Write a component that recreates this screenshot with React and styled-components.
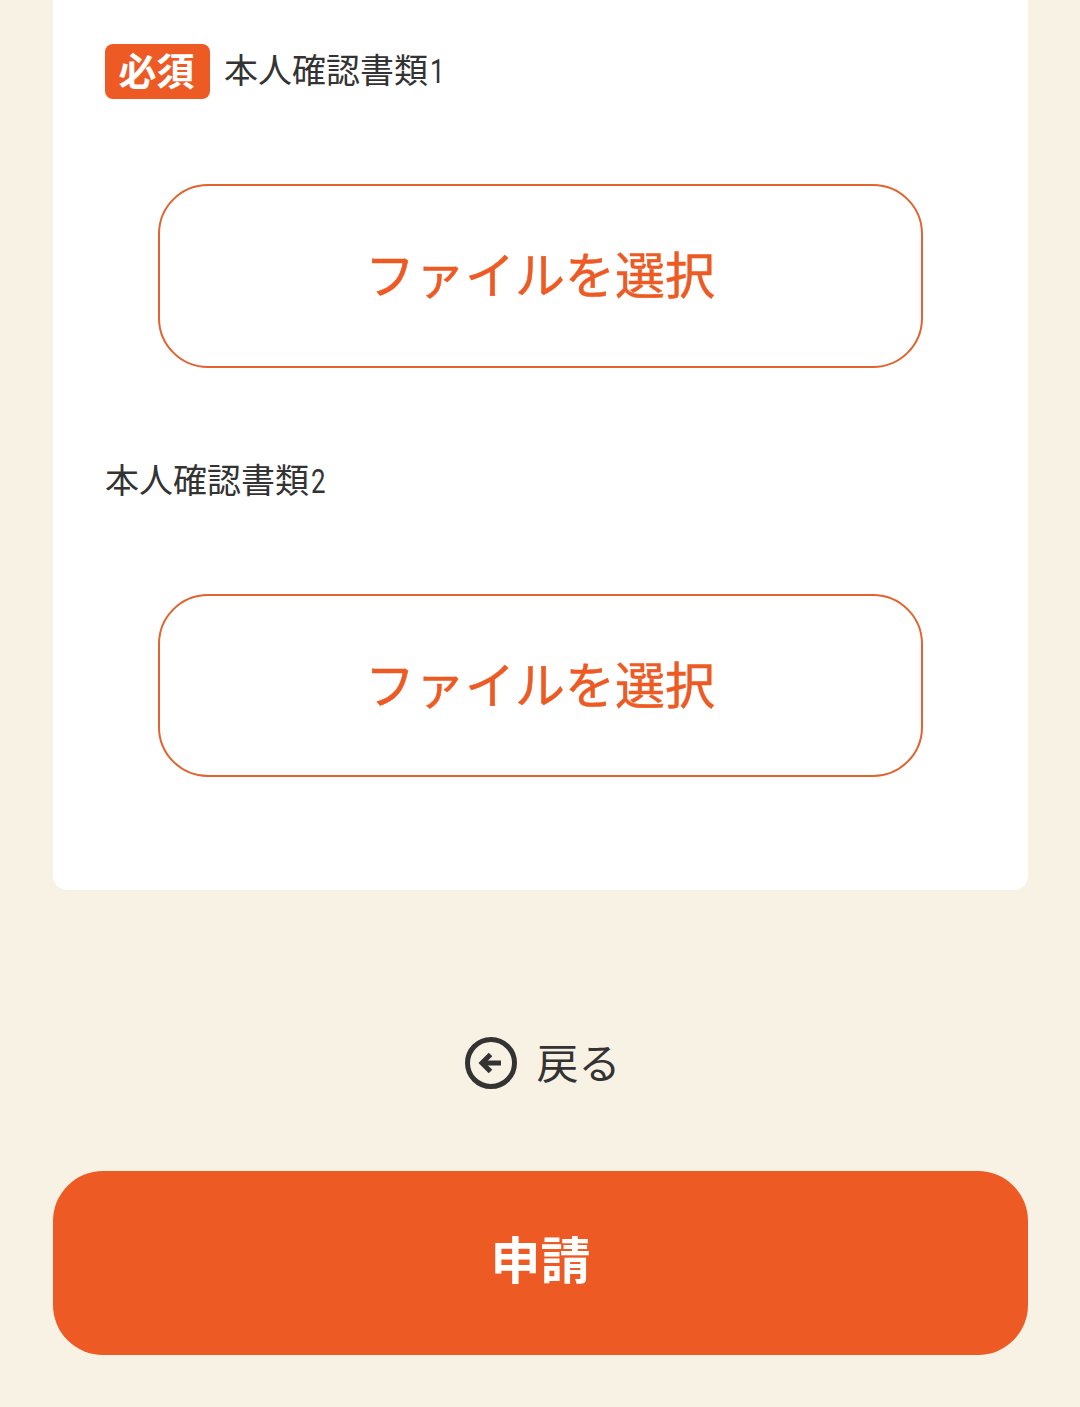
import React from 'react';
import styled, { createGlobalStyle } from 'styled-components';

const GlobalStyle = createGlobalStyle`
	html, body {
		margin: 0;
		padding: 0;
		background: #f8f2e5;
	}
	body {
		font-family: "Noto Sans CJK JP", "Noto Sans", sans-serif;
		color: #333333;
	}
`;

const Page = styled.main`
	width: 1080px;
	height: 1407px;
	box-sizing: border-box;
	padding: 0 52px 0 53px;
	background: #f8f2e5;
	overflow: hidden;
`;

const Card = styled.section`
	height: 890px;
	box-sizing: border-box;
	padding: 44px 52px 0;
	background: #ffffff;
	border-radius: 0 0 14px 14px;
`;

const Field = styled.div`
	display: flex;
	flex-direction: column;
	margin-bottom: 86px;
`;

const LabelRow = styled.div`
	display: flex;
	align-items: center;
	height: 55px;
	gap: 14px;
	margin-bottom: 85px;
`;

const Required = styled.span`
	display: flex;
	align-items: center;
	justify-content: center;
	width: 105px;
	height: 55px;
	box-sizing: border-box;
	padding: 0 2px 5px 0;
	border-radius: 8px;
	background: #ee5a24;
	color: #ffffff;
	font-size: 38px;
	font-weight: 700;
	line-height: 1;
`;

const Label = styled.span`
	padding-bottom: 4px;
	font-size: 34px;
	font-weight: 400;
	line-height: 1;
	color: #333333;
`;

const Digit = styled.span`
	display: inline-block;
	width: 15px;
	margin-left: 2px;
	font-family: Roboto, sans-serif;
	font-weight: 400;
	transform: scaleX(0.76);
	transform-origin: left center;
`;

const FileButton = styled.button`
	display: flex;
	align-items: center;
	justify-content: center;
	align-self: center;
	width: 765px;
	height: ${({ $short }) => ($short ? '183px' : '184px')};
	box-sizing: border-box;
	margin-right: 1px;
	padding: 0 0 8px;
	border: 2px solid #e2632f;
	border-radius: 50px;
	background: #ffffff;
	color: #ee5a24;
	font-family: inherit;
	font-size: 50px;
	font-weight: 400;
	line-height: 1;
	-webkit-text-stroke: 0.5px #ee5a24;
`;

const BackLink = styled.a`
	display: flex;
	align-items: center;
	justify-content: center;
	gap: 18px;
	height: 56px;
	margin-top: 145px;
	padding-left: 4px;
	color: #333333;
	font-size: 42px;
	font-weight: 400;
	line-height: 1;
`;

const BackText = styled.span`
	padding-bottom: 4px;
`;

const SubmitButton = styled.button`
	display: flex;
	align-items: center;
	justify-content: center;
	width: 975px;
	height: 184px;
	margin-top: 80px;
	padding: 0 0 12px;
	border: none;
	border-radius: 50px;
	background: #ee5a24;
	color: #ffffff;
	font-family: inherit;
	font-size: 50px;
	font-weight: 700;
	line-height: 1;
`;

const BackIcon = () => (
	<svg width="54" height="54" viewBox="0 0 54 54" aria-hidden="true">
		<circle cx="27" cy="27" r="23.5" fill="none" stroke="#333333" strokeWidth="5" />
		<path d="M37 27H20" fill="none" stroke="#333333" strokeWidth="5" />
		<path d="M26.5 18.5 18 27l8.5 8.5" fill="none" stroke="#333333" strokeWidth="5" />
	</svg>
);

const App = () => (
	<>
		<GlobalStyle />
		<Page>
			<Card>
				<Field>
					<LabelRow>
						<Required>必須</Required>
						<Label>本人確認書類<Digit>1</Digit></Label>
					</LabelRow>
					<FileButton>ファイルを選択</FileButton>
				</Field>
				<Field>
					<LabelRow>
						<Label>本人確認書類<Digit>2</Digit></Label>
					</LabelRow>
					<FileButton $short>ファイルを選択</FileButton>
				</Field>
			</Card>
			<BackLink>
				<BackIcon />
				<BackText>戻る</BackText>
			</BackLink>
			<SubmitButton>申請</SubmitButton>
		</Page>
	</>
);

export default App;
